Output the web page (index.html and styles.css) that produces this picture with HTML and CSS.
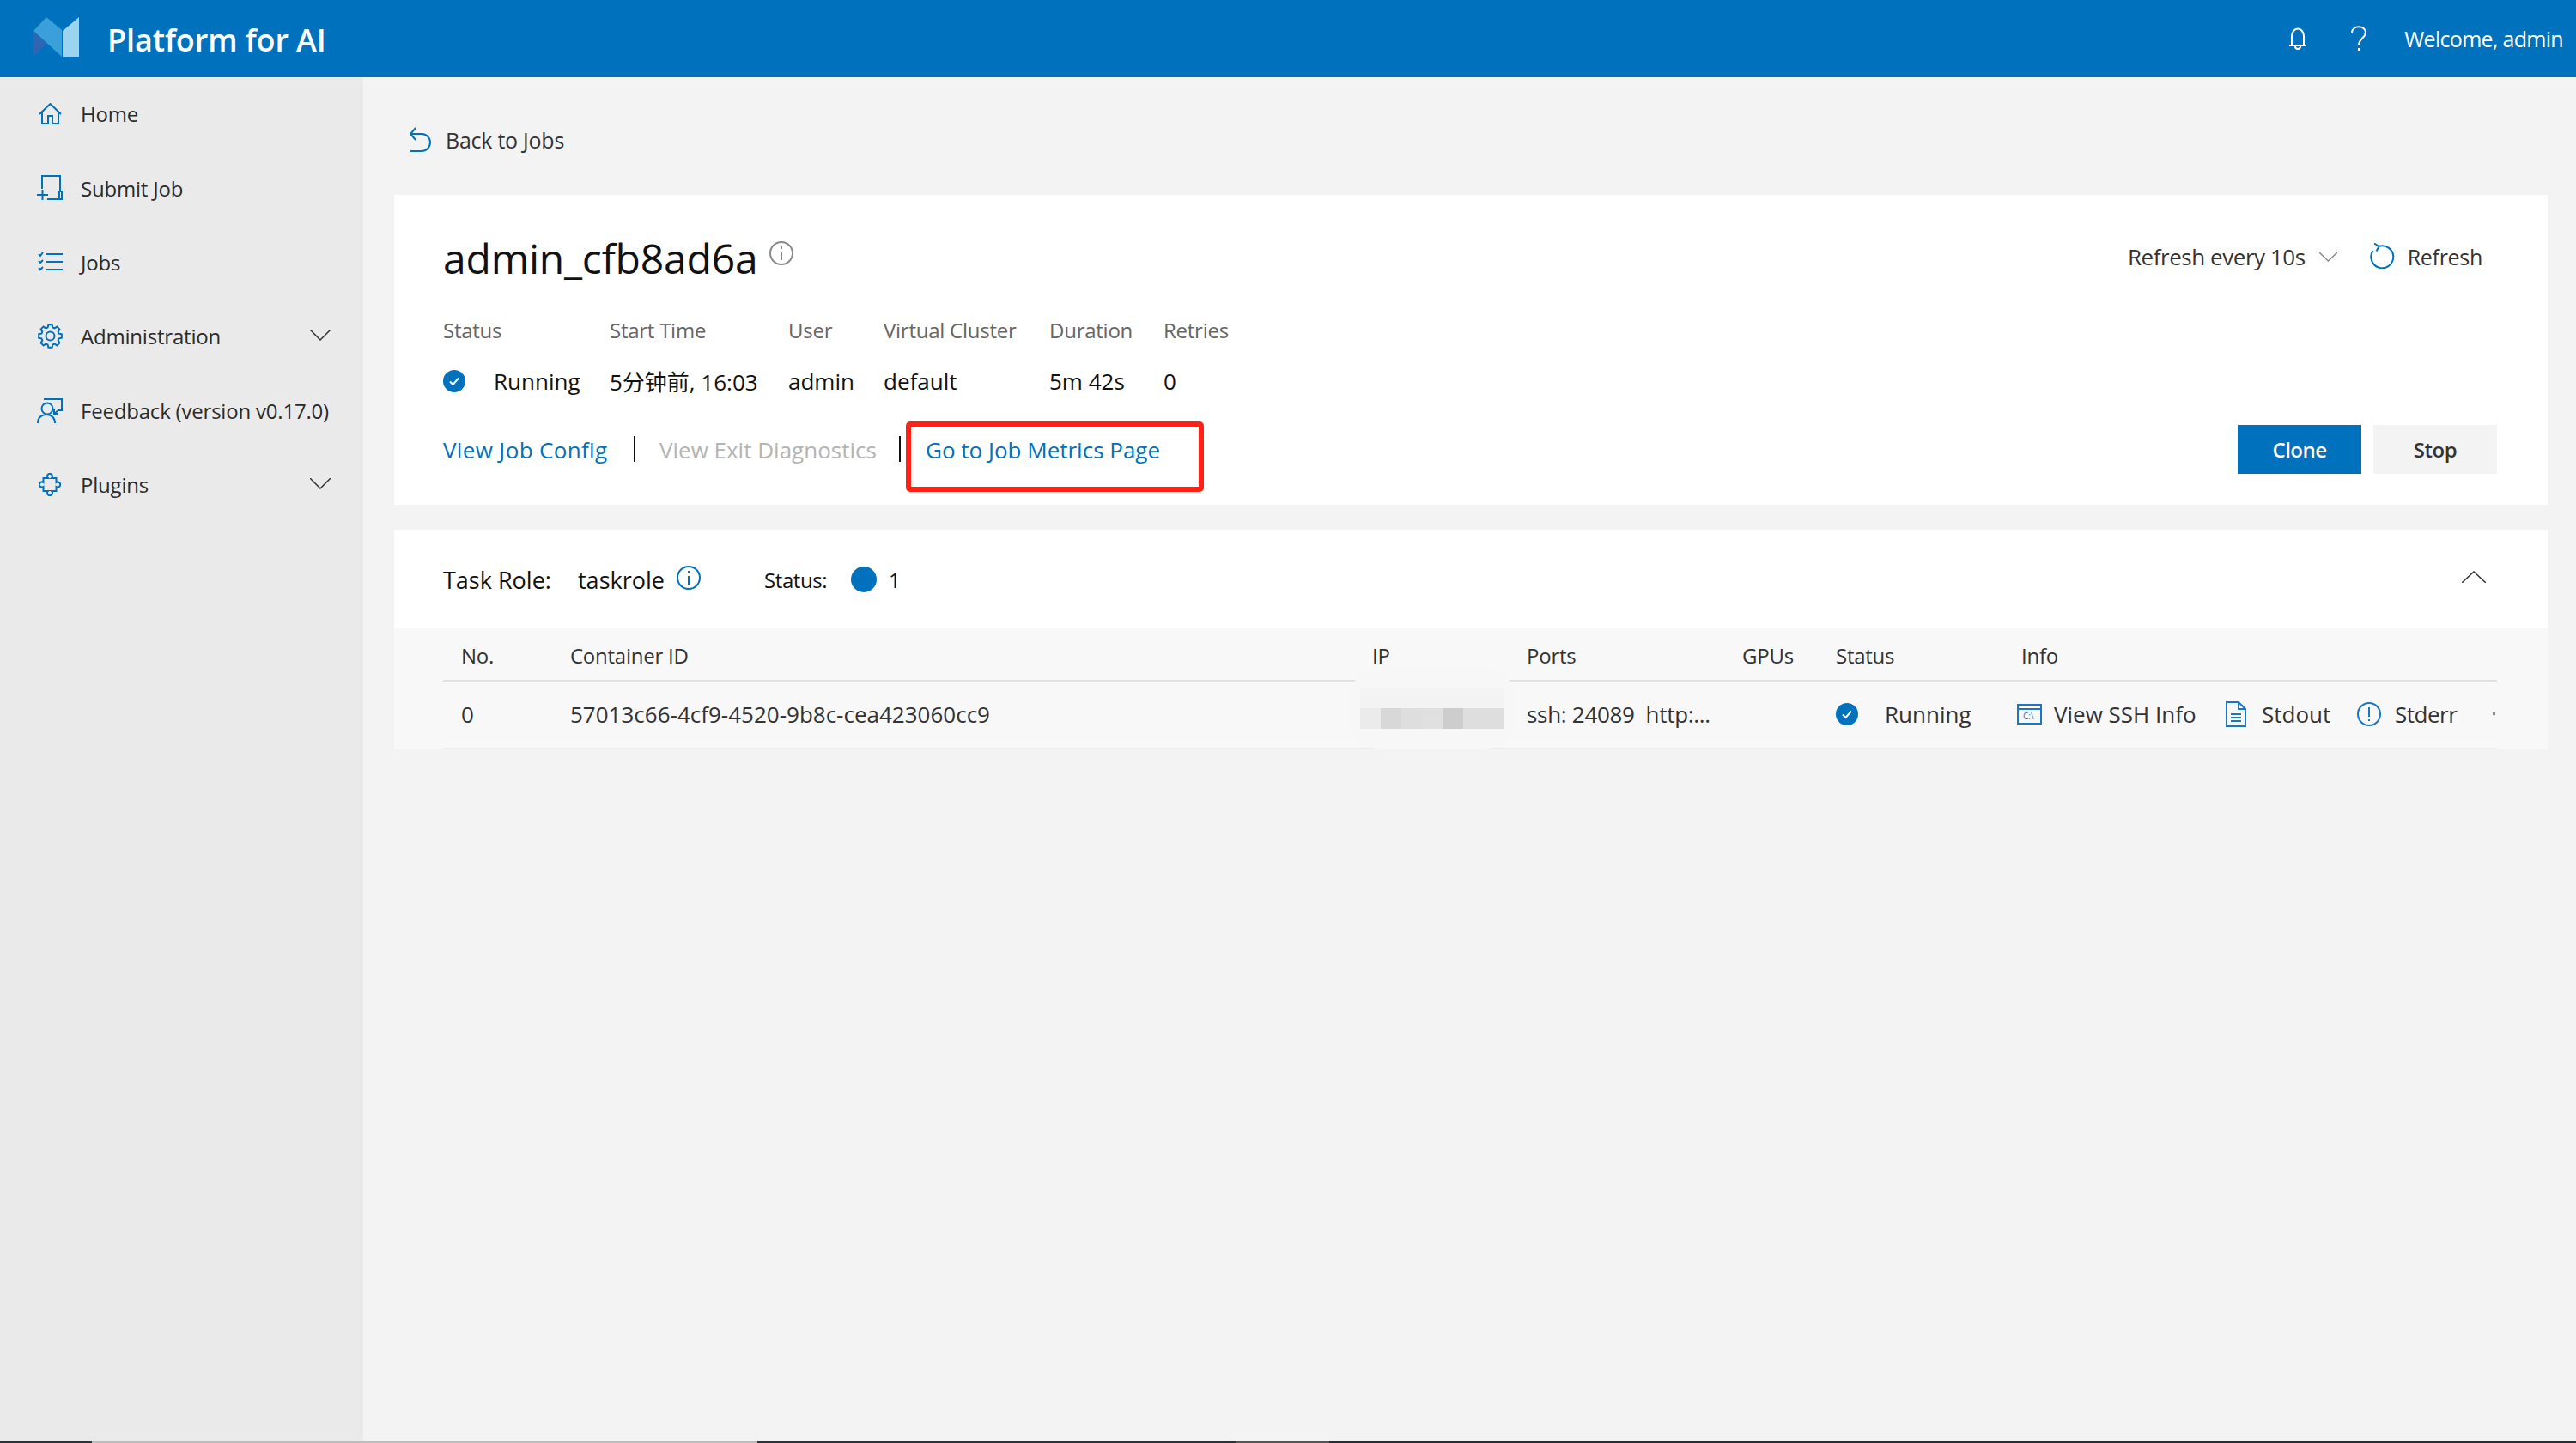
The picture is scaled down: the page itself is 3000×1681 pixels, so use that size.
FILE: index.html
```html
<!DOCTYPE html>
<html lang="en">
<head>
  <meta charset="UTF-8">
  <title>Platform for AI</title>
  <link rel="stylesheet" href="styles.css">
</head>
<body>

  <header class="topbar">
    <svg class="logo" viewBox="0 0 54 47">
      <polygon points="0,16 15,0 33,15 33,46 0,16" fill="#3b9fd9"/>
      <polygon points="0,16 15,31 0,46" fill="#2f66b4"/>
      <polygon points="34,16 53,0 53,46 34,46" fill="#9cd4f0"/>
    </svg>
    <span class="brand">Platform for AI</span>
    <svg class="bell" viewBox="0 0 22 26">
      <path d="M4 20V10a7 8.500 0 0 1 14 0v10M1 21h20M8 22a3 3 0 0 0 6 0"/>
    </svg>
    <svg class="help" viewBox="0 0 18 29">
      <path d="M1 8C1-1 17-1 17 8c0 6-8 7-8 15M9 26v3"/>
    </svg>
    <span class="welcome">Welcome, admin</span>
  </header>

  <div class="layout">
    <nav class="sidebar">
      <a class="nav-item">
        <span class="nav-icon"><svg width="27" height="25" viewBox="0 0 27 25"><path d="M1 13 13.500 1 26 13M4 10v14h7v-9h5v9h7V10"/></svg></span>
        Home
      </a>
      <a class="nav-item">
        <span class="nav-icon"><svg width="30" height="30" viewBox="0 0 30 30"><path d="M6 16V1h21v17M12 28h17v-9h-3v9M0 23h13M6.500 17v12"/></svg></span>
        Submit Job
      </a>
      <a class="nav-item">
        <span class="nav-icon"><svg width="29" height="22" viewBox="0 0 29 22"><path d="M10 2h19M10 11h19M10 20h19M1 2l2 2 3-4M1 10l2 2 3-3M1 18l2 2 3-3"/></svg></span>
        Jobs
      </a>
      <a class="nav-item">
        <span class="nav-icon"><svg width="29" height="29" viewBox="0 0 29 29"><path d="M11.610 4.410 12.390 1.170H16.610L17.390 4.410 19.590 5.320 22.440 3.580 25.420 6.560 23.680 9.410 24.590 11.610 27.830 12.390V16.610L24.590 17.390 23.680 19.590 25.420 22.440 22.440 25.420 19.590 23.680 17.390 24.590 16.610 27.830H12.390L11.610 24.590 9.410 23.680 6.560 25.420 3.580 22.440 5.320 19.590 4.410 17.390 1.170 16.610V12.390L4.410 11.610 5.320 9.410 3.580 6.560 6.560 3.580 9.410 5.320Z"/><circle cx="14.500" cy="14.500" r="5"/></svg></span>
        Administration
        <svg class="nav-chevron" viewBox="0 0 24 13"><path d="M0 0 12 12 24 0"/></svg>
      </a>
      <a class="nav-item">
        <span class="nav-icon"><svg width="30" height="29" viewBox="0 0 30 29"><path d="M8 1h21v13h-4M25 14l-5 4M20 12v6h5M1 29c0-7 5-10 10-10s10 3 10 10"/><circle cx="12" cy="12" r="6.500"/></svg></span>
        Feedback (version v0.17.0)
      </a>
      <a class="nav-item">
        <span class="nav-icon"><svg width="26" height="27" viewBox="0 0 26 27"><path d="M5.500 6H11a3 3 0 1 1 4 0h5.500v5a3 3 0 1 1 0 5v5H15a3 3 0 1 1-4 0H5.500v-5a3 3 0 1 1 0-5z"/></svg></span>
        Plugins
        <svg class="nav-chevron" viewBox="0 0 24 13"><path d="M0 0 12 12 24 0"/></svg>
      </a>
    </nav>

    <main class="content">
      <a class="back">
        <svg width="26" height="29" viewBox="0 0 26 29"><path d="M7 1 1 8l6 7M1 8h13a10 10 0 0 1 0 20H1"/></svg>
        Back to Jobs
      </a>

      <section class="card job-card">
        <div class="title-row">
          <h1>admin_cfb8ad6a</h1>
          <svg class="info muted" viewBox="0 0 28 28"><circle cx="14" cy="14" r="13"/><path d="M14 12v10M14 6v3"/></svg>
          <div class="refresh-box">
            <span class="refresh-every">Refresh every 10s</span>
            <svg class="refresh-chevron" viewBox="0 0 21 11"><path d="M0 0 10.500 10 21 0"/></svg>
            <svg class="refresh-icon" viewBox="0 0 30 30"><path d="M10 4A13 13 0 1 1 3.500 9M5 .5 10.500 4 7.500 9.500"/></svg>
            <span class="refresh-text">Refresh</span>
          </div>
        </div>

        <div class="meta">
          <span class="meta-label">Status</span>
          <span class="meta-label">Start Time</span>
          <span class="meta-label">User</span>
          <span class="meta-label">Virtual Cluster</span>
          <span class="meta-label">Duration</span>
          <span class="meta-label">Retries</span>
          <span class="meta-value status-value">
            <svg class="status-icon" viewBox="0 0 26 26"><circle cx="13" cy="13" r="13"/><path d="M8 13.500 11.500 17 18 9.500"/></svg>
            Running
          </span>
          <span class="meta-value">5分钟前, 16:03</span>
          <span class="meta-value">admin</span>
          <span class="meta-value">default</span>
          <span class="meta-value">5m 42s</span>
          <span class="meta-value">0</span>
        </div>

        <div class="links">
          <a class="link">View Job Config</a>
          <span class="sep"></span>
          <a class="link disabled">View Exit Diagnostics</a>
          <span class="sep thin"></span>
          <a class="link">Go to Job Metrics Page</a>
          <div class="actions">
            <button class="btn primary">Clone</button>
            <button class="btn">Stop</button>
          </div>
        </div>

        <div class="highlight"></div>
      </section>

      <section class="card task-card">
        <div class="task-head">
          <span class="role-label">Task Role:</span>
          <span class="role-name">taskrole</span>
          <svg class="info blue" viewBox="0 0 28 28"><circle cx="14" cy="14" r="13"/><path d="M14 12v10M14 6v3"/></svg>
          <span class="head-status">Status:</span>
          <span class="dot"></span>
          <span class="count">1</span>
          <svg class="collapse" viewBox="0 0 28 14"><path d="M0 14 14 1l14 13"/></svg>
        </div>

        <div class="task-table">
          <div class="task-row header">
            <span>No.</span>
            <span>Container ID</span>
            <span>IP</span>
            <span>Ports</span>
            <span>GPUs</span>
            <span>Status</span>
            <span>Info</span>
          </div>
          <div class="task-row body">
            <span>0</span>
            <span>57013c66-4cf9-4520-9b8c-cea423060cc9</span>
            <span></span>
            <span class="cell-ports">ssh: 24089&nbsp; http:...</span>
            <span></span>
            <span class="cell-status">
              <svg class="status-icon" viewBox="0 0 26 26"><circle cx="13" cy="13" r="13"/><path d="M8 13.500 11.500 17 18 9.500"/></svg>
              Running
            </span>
            <span class="cell-info">
              <a class="action ssh">
                <svg width="29" height="24" viewBox="0 0 29 24"><path d="M1 1h27v22H1zM1 6h27"/><text x="7" y="18">C:\</text></svg>
                View SSH Info
              </a>
              <a class="action stdout">
                <svg width="24" height="30" viewBox="0 0 24 30"><path d="M1 1h14l8 8v20H1zM15 1v8h8M6 15h12M6 19h12M6 23h12"/></svg>
                Stdout
              </a>
              <a class="action stderr">
                <svg width="28" height="28" viewBox="0 0 28 28"><circle cx="14" cy="14" r="13"/><path d="M14 6v11M14 20v2"/></svg>
                Stderr
              </a>
              <span class="more-dot"></span>
            </span>

            <div class="ip-mask">
              <div class="ip-blur">
                <i class="c1"></i><i class="c1"></i><i class="c1"></i><i class="c1"></i><i class="c1"></i><i class="c1"></i><i class="c1"></i>
                <i class="c2"></i><i class="c3"></i><i class="c4"></i><i class="c5"></i><i class="c6"></i><i class="c4"></i><i class="c4"></i>
              </div>
            </div>
          </div>
        </div>
      </section>
    </main>
  </div>

  <div class="strip">
    <span class="seg dark-a w1"></span>
    <span class="seg pale w2"></span>
    <span class="seg dark-a w3"></span>
    <span class="seg mid w4"></span>
    <span class="seg dark-b w5"></span>
  </div>

</body>
</html>
```
FILE: styles.css
```css
* {
  box-sizing: border-box;
}
html, body {
  margin: 0;
  height: 100%;
}
body {
  display: flex;
  flex-direction: column;
  height: 100vh;
  overflow: hidden;
  font-family: "Open Sans", "Noto Sans CJK SC", sans-serif;
  font-size: 24px;
  letter-spacing: -0.2px;
  color: #2b2b2b;
  background-color: #f3f3f3;
}
svg {
  flex: none;
  display: block;
  fill: none;
}

/* top bar */
.topbar {
  display: flex;
  align-items: center;
  flex: none;
  height: 90px;
  padding-left: 39px;
  background-color: #0071bc;
  color: #fff;
}
.logo {
  width: 54px;
  height: 47px;
  margin-top: -3px;
}
.brand {
  margin-left: 32px;
  margin-top: 2px;
  font-size: 36px;
  font-weight: 600;
  letter-spacing: -0.1px;
}
.bell {
  width: 22px;
  height: 26px;
  margin-left: auto;
  margin-top: -1px;
  stroke: #fff;
  stroke-width: 2;
}
.help {
  width: 18px;
  height: 29px;
  margin-left: 51px;
  margin-top: -1px;
  stroke: #fff;
  stroke-width: 2;
}
.welcome {
  margin-left: 44px;
  margin-right: 15px;
  font-size: 25px;
  letter-spacing: -0.7px;
  white-space: nowrap;
}

.layout {
  display: flex;
  flex: 1;
  min-height: 0;
}

/* left nav */
.sidebar {
  flex: none;
  width: 423px;
  background-color: #eaeaea;
}
.nav-item {
  display: flex;
  align-items: center;
  height: 86.400px;
  padding: 0 0 1px 43px;
  color: #2b2b2b;
  white-space: nowrap;
}
.nav-icon {
  display: flex;
  justify-content: center;
  width: 30px;
  margin-right: 21px;
}
.nav-icon svg {
  stroke: #0071bc;
  stroke-width: 2;
}
.nav-chevron {
  width: 24px;
  height: 13px;
  margin-left: auto;
  margin-right: 38px;
  margin-top: -3px;
  stroke: #333;
  stroke-width: 1.500;
}

.content {
  flex: 1;
  min-width: 0;
  padding: 0 33px 0 36px;
  font-size: 26px;
  letter-spacing: 0;
}
.back {
  display: flex;
  align-items: center;
  height: 137px;
  padding: 8px 0 0 18px;
  font-size: 25px;
  letter-spacing: -0.25px;
  color: #333;
}
.back svg {
  margin-right: 16px;
  stroke: #0071bc;
  stroke-width: 2;
}
.card {
  position: relative;
  background-color: #fff;
}

/* job summary */
.job-card {
  height: 361px;
  padding: 40px 59px 0 57px;
}
.title-row {
  display: flex;
  align-items: center;
  height: 66px;
}
h1 {
  margin: 0;
  font-size: 48px;
  font-weight: 400;
  letter-spacing: -0.2px;
  color: #111;
}
.info {
  width: 28px;
  height: 28px;
  stroke-width: 2;
}
.info.muted {
  margin-left: 14px;
  margin-top: -10px;
  stroke: #8a8a8a;
}
.info.blue {
  stroke: #0071bc;
  margin-top: -4px;
  margin-right: 74px;
}
.refresh-box {
  display: flex;
  align-items: center;
  margin-left: auto;
  margin-right: 17px;
  margin-top: -2px;
  color: #333;
}
.refresh-every {
  letter-spacing: -0.45px;
}
.refresh-chevron {
  width: 21px;
  height: 11px;
  margin-left: 16px;
  stroke: #888;
  stroke-width: 1.500;
}
.refresh-icon {
  width: 30px;
  height: 30px;
  margin-left: 38px;
  margin-right: 14px;
  margin-top: -2px;
  stroke: #0071bc;
  stroke-width: 2;
}
.refresh-text {
  font-size: 25px;
  letter-spacing: -0.3px;
}
.meta {
  display: grid;
  grid-template-columns: 194px 208px 111px 193px 133px auto;
  grid-auto-rows: 40px;
  row-gap: 20px;
  align-items: center;
  margin-top: 31px;
}
.meta-label {
  font-size: 24px;
  letter-spacing: -0.25px;
  color: #666;
}
.meta-value {
  color: #111;
  white-space: nowrap;
}
.status-value {
  display: flex;
  align-items: center;
}
.status-value .status-icon {
  margin-right: 33px;
}
.status-icon {
  width: 26px;
  height: 26px;
}
.status-icon circle {
  fill: #0071bc;
}
.status-icon path {
  stroke: #fff;
  stroke-width: 2;
}
.links {
  display: flex;
  align-items: center;
  height: 57px;
  margin-top: 31px;
}
.link {
  color: #0071bc;
  white-space: nowrap;
}
.link:nth-child(1) {
  width: 222px;
  letter-spacing: 0.35px;
}
.link.disabled {
  width: 279px;
  color: #b4b4b4;
}
.sep {
  width: 30px;
  height: 30px;
  border-left: 2px solid #111;
  margin-top: -2px;
}
.sep.thin {
  width: 31px;
}
.actions {
  display: flex;
  gap: 14px;
  margin-left: auto;
}
.btn {
  width: 144px;
  height: 57px;
  padding: 0;
  border: none;
  border-radius: 0;
  background-color: #f3f3f3;
  color: #333;
  font: 600 24px "Open Sans", sans-serif;
  letter-spacing: -0.5px;
}
.btn.primary {
  background-color: #0071bc;
  color: #fff;
}
.highlight {
  position: absolute;
  left: 596px;
  top: 264px;
  width: 347px;
  height: 82px;
  border: 6px solid #ff2016;
  border-radius: 5px;
}

/* task role */
.task-card {
  height: 256px;
  margin-top: 29px;
  background-color: #f8f8f8;
}
.task-head {
  display: flex;
  align-items: center;
  height: 115px;
  padding: 1px 72px 0 57px;
  background-color: #fff;
  color: #111;
}
.role-label {
  width: 157px;
  font-size: 27px;
}
.role-name {
  width: 115px;
  font-size: 27px;
}
.head-status {
  width: 101px;
  font-size: 24px;
  letter-spacing: -0.4px;
}
.dot {
  width: 30px;
  height: 30px;
  margin-right: 14px;
  border-radius: 50%;
  background-color: #0071bc;
}
.count {
  font-size: 24px;
}
.collapse {
  width: 28px;
  height: 14px;
  margin-left: auto;
  margin-top: -6px;
  stroke: #333;
  stroke-width: 1.500;
}
.task-table {
  padding: 0 59px 0 57px;
}
.task-row {
  position: relative;
  display: grid;
  grid-template-columns: 127px 934px 180px 251px 109px 216px 1fr;
  align-items: center;
  padding-left: 21px;
  white-space: nowrap;
}
.task-row.header {
  height: 62px;
  padding-top: 2px;
  border-bottom: 2px solid #e1e1e1;
  font-size: 24px;
  letter-spacing: -0.25px;
  color: #333;
}
.task-row.body {
  height: 79px;
  padding-bottom: 2px;
  border-bottom: 2px solid #ececec;
  color: #333;
}
.cell-ports {
  letter-spacing: -0.3px;
}
.cell-status {
  display: flex;
  align-items: center;
}
.cell-status .status-icon {
  margin-right: 31px;
}
.cell-info {
  display: flex;
  align-items: center;
  margin-left: -5px;
}
.action {
  display: flex;
  align-items: center;
}
.action svg {
  stroke: #1b76c4;
  stroke-width: 2;
}
.action text {
  fill: #1b76c4;
  stroke: none;
  font-size: 10px;
}
.action.ssh {
  width: 243px;
}
.action.ssh svg {
  margin-right: 14px;
}
.action.stdout {
  width: 153px;
}
.action.stdout svg {
  margin-right: 18px;
}
.action.stderr {
  width: 158px;
  letter-spacing: -0.5px;
}
.action.stderr svg {
  margin-right: 16px;
}
.more-dot {
  width: 3px;
  height: 3px;
  background-color: #888;
}
.ip-mask {
  position: absolute;
  left: 1054px;
  top: -17px;
  display: flex;
  align-items: center;
  justify-content: center;
  width: 196px;
  height: 96px;
  border-radius: 40px;
  background-color: #f7f7f7;
}
.ip-blur {
  display: grid;
  grid-template-columns: repeat(7, 24px);
  grid-auto-rows: 24px;
}
.c1 { background-color: #f3f3f3; }
.c2 { background-color: #ebebeb; }
.c3 { background-color: #d8d8d8; }
.c4 { background-color: #dedede; }
.c5 { background-color: #e0e0e0; }
.c6 { background-color: #cdcdcd; }

/* thin strip along the bottom edge */
.strip {
  display: flex;
  flex: none;
  height: 2px;
}
.seg {
  display: block;
}
.dark-a { background-color: #22363e; }
.dark-b { background-color: #1f2d3d; }
.pale { background-color: #bdbdbd; }
.mid { background-color: #555; }
.w1 { width: 107px; }
.w2 { width: 775px; }
.w3 { width: 557px; }
.w4 { width: 109px; }
.w5 { flex: 1; }
```
